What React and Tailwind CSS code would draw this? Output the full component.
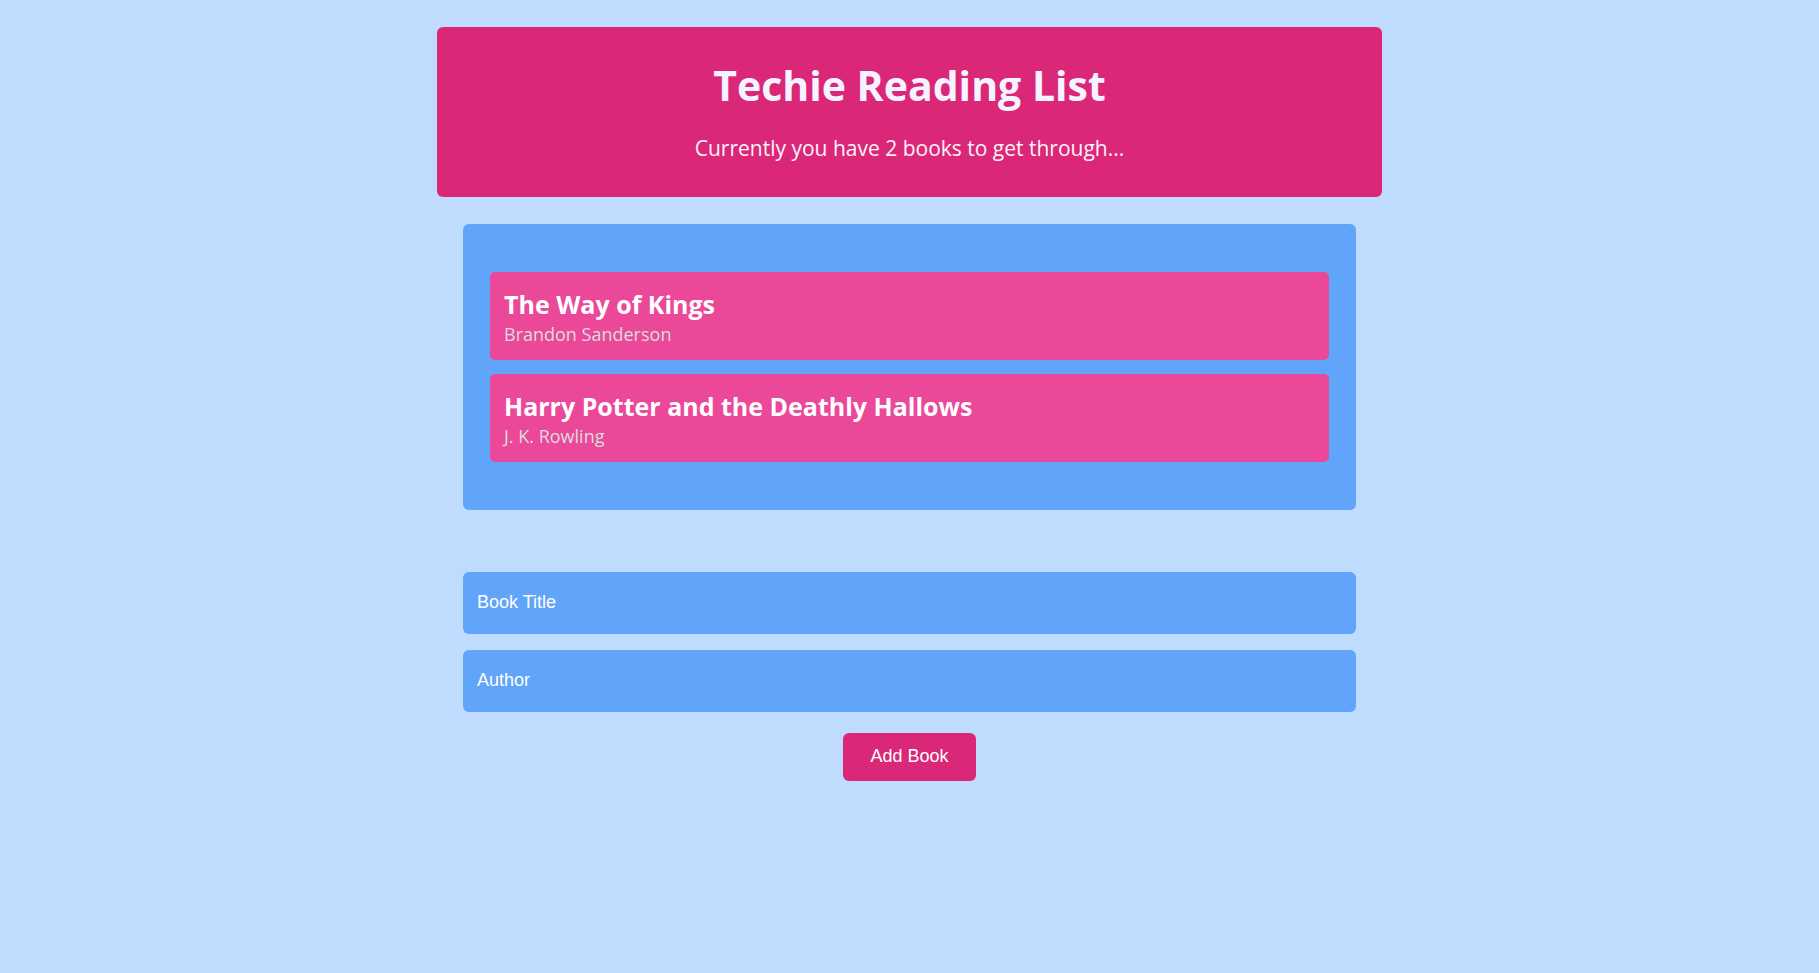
import { useState } from "react";

const initialBooks = [
  { id: 1, title: "The Way of Kings", author: "Brandon Sanderson" },
  { id: 2, title: "Harry Potter and the Deathly Hallows", author: "J. K. Rowling" },
];

function Header({ count }) {
  return (
    <header className="h-[170px] rounded-md bg-[#db2777] px-6 pt-7 text-center">
      <h1 className="text-[41px] leading-[60px] font-bold text-[#f5f3ff]">Techie Reading List</h1>
      <p className="mt-4 text-[21px] leading-[34px] text-[#fdf2f8]">
        Currently you have {count} books to get through...
      </p>
    </header>
  );
}

function BookList({ books, onRemove }) {
  return (
    <ul className="mx-[26px] mt-[27px] flex flex-col gap-[14px] rounded-md bg-[#60a5fa] px-[27px] py-12">
      {books.map((book) => (
        <li
          key={book.id}
          onClick={() => onRemove(book.id)}
          className="h-[88px] cursor-pointer rounded-[5px] bg-[#ec4899] px-[14px] pt-4"
        >
          <h2 className="text-[25px] leading-8 font-bold text-white">{book.title}</h2>
          <p className="text-[18px] leading-7 text-[#dddddd]">{book.author}</p>
        </li>
      ))}
    </ul>
  );
}

const fieldClass =
  "block h-[62px] w-full rounded-md bg-[#60a5fa] px-[14px] pb-[2px] font-['Liberation_Sans',Arial,sans-serif] text-[18px] text-white placeholder:text-white focus:outline-none";

function NewBookForm({ onAdd }) {
  const [title, setTitle] = useState("");
  const [author, setAuthor] = useState("");

  const submit = (event) => {
    event.preventDefault();
    if (!title || !author) return;
    onAdd({ id: Date.now(), title, author });
    setTitle("");
    setAuthor("");
  };

  return (
    <form onSubmit={submit} className="mx-[26px] mt-[62px] flex flex-col items-center">
      <input
        type="text"
        aria-label="Book Title"
        placeholder="Book Title"
        value={title}
        onChange={(event) => setTitle(event.target.value)}
        className={fieldClass}
      />
      <input
        type="text"
        aria-label="Author"
        placeholder="Author"
        value={author}
        onChange={(event) => setAuthor(event.target.value)}
        className={`mt-4 ${fieldClass}`}
      />
      <button
        type="submit"
        className="mt-[21px] h-12 cursor-pointer rounded-md bg-[#db2777] px-[27px] pb-[2px] font-['Liberation_Sans',Arial,sans-serif] text-[18px] text-white"
      >
        Add Book
      </button>
    </form>
  );
}

export default function App() {
  const [books, setBooks] = useState(initialBooks);

  return (
    <div className="min-h-screen bg-[#bfdbfe] px-4 py-[27px] font-['Segoe_UI','Open_Sans','Noto_Sans',sans-serif]">
      <main className="mx-auto max-w-[945px]">
        <Header count={books.length} />
        <BookList
          books={books}
          onRemove={(id) => setBooks(books.filter((book) => book.id !== id))}
        />
        <NewBookForm onAdd={(book) => setBooks([...books, book])} />
      </main>
    </div>
  );
}
